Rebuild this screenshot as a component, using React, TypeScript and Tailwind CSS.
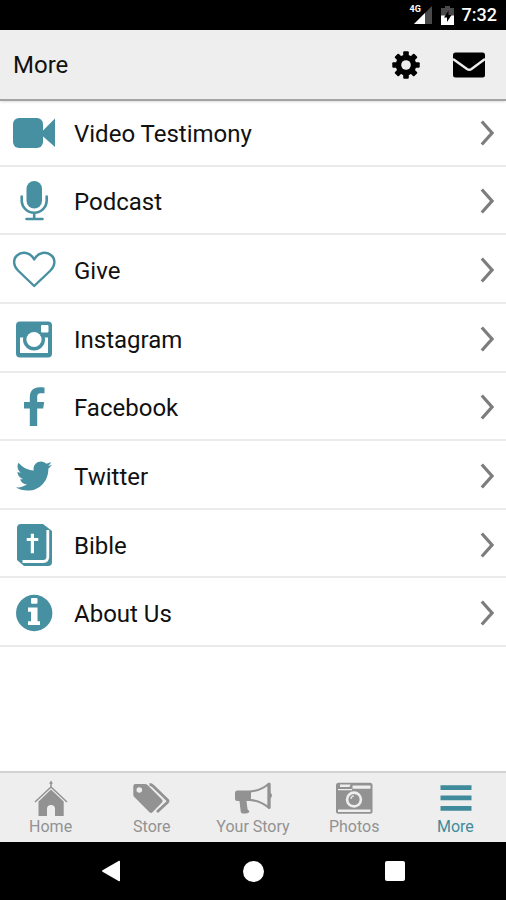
import type { ReactNode } from 'react'
import { FaTwitter } from 'react-icons/fa'

type Item = { label: string; icon: ReactNode }

const ListSvg = ({ children }: { children: ReactNode }) => (
  <svg viewBox="0 0 44 44" className="size-11" fill="currentColor" aria-hidden="true">
    {children}
  </svg>
)

const TabSvg = ({ children }: { children: ReactNode }) => (
  <svg viewBox="0 0 40 36" className="h-9 w-10" fill="currentColor" aria-hidden="true">
    {children}
  </svg>
)

const items: Item[] = [
  {
    label: 'Video Testimony',
    icon: (
      <ListSvg>
        <rect x="1" y="7" width="30" height="30" rx="6" />
        <path d="M30 20.5 43 7.5v28.5L30 24.5z" />
      </ListSvg>
    ),
  },
  {
    label: 'Podcast',
    icon: (
      <ListSvg>
        <rect x="14.5" y="2" width="15.5" height="27.5" rx="7.7" />
        <path
          d="M9.7 17.5v3.8a12.5 12.5 0 0 0 25 0V17.500M22.200 34v6M14.500 40h16"
          fill="none"
          stroke="currentColor"
          strokeWidth="2.600"
          strokeLinecap="round"
        />
      </ListSvg>
    ),
  },
  {
    label: 'Give',
    icon: (
      <ListSvg>
        <path
          d="M22.2 38 6 22.5C1 17.5 1 11 5 7.500 10 3 18.500 4 22.200 11.500 26 4 34.500 3 39.500 7.500 43.500 11 43.500 17.500 38.500 22.500z"
          fill="none"
          stroke="currentColor"
          strokeWidth="2.400"
          strokeLinejoin="round"
        />
      </ListSvg>
    ),
  },
  {
    label: 'Instagram',
    icon: (
      <ListSvg>
        <rect x="4" y="4.500" width="36" height="36" rx="4" />
        <path d="M8 20.500h28V36H8z" fill="#fff" />
        <circle cx="22" cy="22.500" r="11" />
        <circle cx="22" cy="22.500" r="7.600" fill="#fff" />
        <rect x="29" y="8" width="7.500" height="7.500" rx="1" fill="#fff" />
      </ListSvg>
    ),
  },
  {
    label: 'Facebook',
    icon: (
      <ListSvg>
        <path d="M17.800 41V23.500H12V17h5.800v-4.200C17.800 5.500 21.500 2.200 27.500 2.200c2.200 0 4 .1 5 .3v5.800h-3.300c-3.200 0-4 1.400-4 3.800V17h7l-1 6.500h-6V41z" />
      </ListSvg>
    ),
  },
  { label: 'Twitter', icon: <FaTwitter className="size-9" aria-hidden="true" /> },
  {
    label: 'Bible',
    icon: (
      <ListSvg>
        <path d="M9 1h22l9 7v31q0 4-4 4H12l-7-6V5q0-4 4-4z" />
        <path d="M35.800 7v26.500q0 5-4.500 5H10.500" fill="none" stroke="#fff" strokeWidth="2.800" />
        <path d="M20.400 10.700v19.600M14.700 16.500h11.600" fill="none" stroke="#fff" strokeWidth="3.200" />
      </ListSvg>
    ),
  },
  {
    label: 'About Us',
    icon: (
      <ListSvg>
        <circle cx="22.200" cy="22" r="18.200" />
        <rect x="19" y="7" width="6.500" height="5.800" rx="1" fill="#fff" />
        <path d="M16 16.500h9.500v13.800H28V34H16v-3.700h3v-9.500h-3z" fill="#fff" />
      </ListSvg>
    ),
  },
]

const tabs: Item[] = [
  {
    label: 'Home',
    icon: (
      <TabSvg>
        <path d="M20 0v7M18.500 2.200h3M4 21 20 6l16 15" fill="none" stroke="currentColor" strokeWidth="1.500" />
        <path d="M20 8.500 32.700 20.500V35H24v-7q0-4-4-4t-4 4v7H7.500V20.500z" />
      </TabSvg>
    ),
  },
  {
    label: 'Store',
    icon: (
      <TabSvg>
        <path
          fillRule="evenodd"
          d="M3.500 3H13q1.500 0 2.500 1l14.500 14.500q1.500 1.500 0 3l-9.500 9.700q-1.500 1.500-3 0L2.300 16Q1.300 15 1.300 13.500V5.200Q1.300 3 3.500 3zM7.300 6.200a2.800 2.800 0 1 0 0 5.600 2.800 2.800 0 0 0 0-5.600z"
        />
        <path d="M17.500 3.500q2 0 3.500 1.500l14.500 14q1 1 0 2.200L25 31" fill="none" stroke="currentColor" strokeWidth="2.800" />
      </TabSvg>
    ),
  },
  {
    label: 'Your Story',
    icon: (
      <TabSvg>
        <path d="M4.500 9.500H18V20h-4.500l1 8 2 2.500q-1 2-3.500 2H9.500q-1.500 0-1.800-2L6.500 20h-2Q2 20 2 17.500V12q0-2.500 2.500-2.500zM37 11.500q2 1 2 3t-2 3z" />
        <path
          d="M17.500 10.500Q28 9.500 35.500 3v23.500Q28 20 17.500 19"
          fill="none"
          stroke="currentColor"
          strokeWidth="2"
          strokeLinejoin="round"
        />
        <path d="M36.200 3v23.500" stroke="currentColor" strokeWidth="3" strokeLinecap="round" />
      </TabSvg>
    ),
  },
  {
    label: 'Photos',
    icon: (
      <TabSvg>
        <rect x="2" y="1.800" width="36.500" height="31" rx="2.500" />
        <path d="M6 3.500h10.500L15.500 6H6zM18.500 4.500h18v3.300h-18zM4 8h14v1.200H4zM4 28.500h32.500V31H4z" fill="#eee" />
        <circle cx="20" cy="18.500" r="8.200" fill="#eee" />
        <circle cx="20" cy="18.500" r="5.600" />
        <path d="M17 18a3 3 0 0 1 3-3" fill="none" stroke="#ddd" strokeWidth="1.400" />
      </TabSvg>
    ),
  },
  {
    label: 'More',
    icon: (
      <TabSvg>
        <path d="M5.500 4.300h31V9h-31zM5.500 14.600h31v4.700h-31zM5.500 25h31v4.700h-31z" />
      </TabSvg>
    ),
  },
]

function StatusBar() {
  return (
    <div className="flex h-[30px] items-center justify-end bg-black pr-[9px] text-white">
      <div className="relative">
        <svg viewBox="0 0 18 18" className="size-[18px]" aria-hidden="true">
          <path d="M18 0v18H0z" fill="#4a4a4a" />
          <path d="M11 7v11H0z" fill="#fff" />
        </svg>
        <span className="absolute -top-px -left-1 bg-black text-[9px] leading-[9px] font-bold">4G</span>
      </div>
      <svg viewBox="0 0 13 19" className="ml-[9px] h-[19px] w-[13px]" aria-hidden="true">
        <path d="M4 0h5v2h4v8H0V2h4z" fill="#4a4a4a" />
        <path d="M0 9.500h13V19H0z" fill="#fff" />
        <path d="M7.500 4.500 3 11.500h3v4.500l4.500-7h-3z" fill="#000" />
      </svg>
      <span className="ml-2 text-[18px] leading-5 font-medium">7:32</span>
    </div>
  )
}

function Header() {
  return (
    <header className="relative z-10 flex h-[71px] items-center justify-between border-b-2 border-[#a3a3a3] bg-[#eee] pr-[21px] pl-[13px] shadow-sm">
      <h1 className="text-2xl leading-8">More</h1>
      <div className="flex items-center gap-[33px]">
        <button type="button" aria-label="Settings">
          <svg viewBox="-14 -14 28 28" className="size-7" aria-hidden="true">
            {[0, 45, 90, 135].map((angle) => (
              <rect key={angle} x="-2.800" y="-13.700" width="5.600" height="27.400" rx="1" transform={`rotate(${angle})`} />
            ))}
            <circle r="10.300" />
            <circle r="4.800" fill="#eee" />
          </svg>
        </button>
        <button type="button" aria-label="Messages">
          <svg viewBox="0 0 32 26" className="h-[26px] w-8" aria-hidden="true">
            <rect y="0.500" width="32" height="25" rx="2.500" />
            <path d="M0 7 14 17q2.300 1.500 4.500 0L32 7" fill="none" stroke="#eee" strokeWidth="2.400" />
          </svg>
        </button>
      </div>
    </header>
  )
}

export default function App() {
  return (
    <div className="flex min-h-screen flex-col bg-white font-[Roboto,sans-serif] text-[#111]">
      <StatusBar />
      <Header />

      {/* Menu rows, the first one tucked under the header edge */}
      <main className="-mt-[3px] flex-1">
        <ul className="grid h-[549px] grid-rows-8">
          {items.map((item) => (
            <li key={item.label} className="border-b-2 border-[#ebebeb]">
              <a href="#" className="flex h-full items-center px-3 pt-[3px]">
                <span className="flex w-11 justify-center text-[#4790a1]">{item.icon}</span>
                <span className="ml-[18px] flex-1 pt-[2px] text-2xl leading-8">{item.label}</span>
                <svg viewBox="0 0 14 26" className="h-[26px] w-3.5" aria-hidden="true">
                  <path d="M1.800 1.500 12 13 1.800 24.500" fill="none" stroke="#7d7d7d" strokeWidth="3.200" />
                </svg>
              </a>
            </li>
          ))}
        </ul>
      </main>

      <nav className="grid grid-cols-5 border-t-2 border-[#d3d3d3] bg-[#eee] pt-2 pb-[7px]">
        {tabs.map((tab) => (
          <a
            key={tab.label}
            href="#"
            className={`flex flex-col items-center gap-0.5 ${tab.label === 'More' ? 'text-[#3f8b9c]' : 'text-[#929292]'}`}
          >
            {tab.icon}
            <span className="text-base leading-4">{tab.label}</span>
          </a>
        ))}
      </nav>

      {/* System navigation */}
      <div className="grid h-[58px] grid-cols-3 place-items-center bg-black px-10 text-white">
        <button type="button" aria-label="Back">
          <svg viewBox="0 0 20 22" className="h-[22px] w-5" fill="currentColor" aria-hidden="true">
            <path d="M18 .8q1-.5 1 .6v19.200q0 1-1 .6L1.500 11.700q-1-.7 0-1.400z" />
          </svg>
        </button>
        <button type="button" aria-label="Home screen" className="size-[21px] rounded-full bg-white" />
        <button type="button" aria-label="Recent apps" className="size-5 rounded-xs bg-white" />
      </div>
    </div>
  )
}
